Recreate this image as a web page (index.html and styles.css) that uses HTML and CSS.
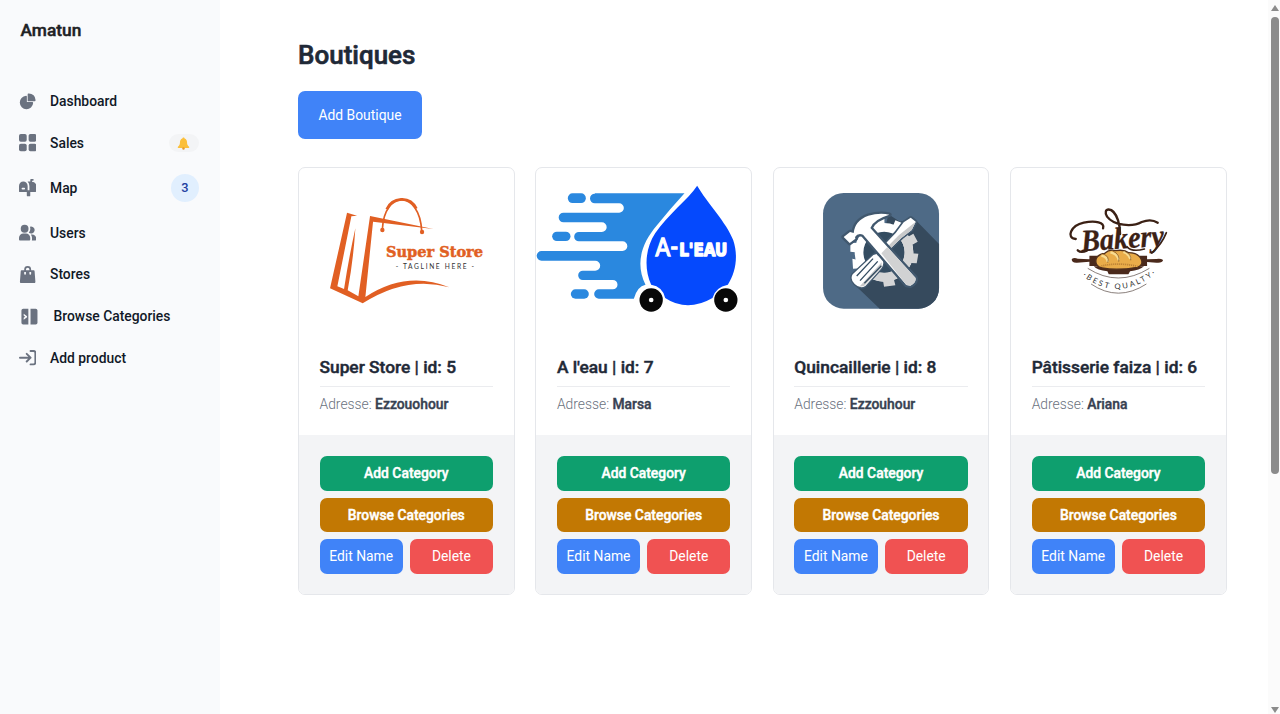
FILE: index.html
```html
<!DOCTYPE html>
<html lang="fr">
<head>
<meta charset="utf-8">
<title>Amatun</title>
<link rel="stylesheet" href="styles.css">
</head>
<body>
<div class="app">
  <aside class="sidebar">
    <div class="brand">Amatun</div>
    <nav class="nav">
      <a class="nav-item"><svg class="icon" viewBox="0 0 22 21"><path d="M16.975 11H10V4.025a1 1 0 0 0-1.066-.998 8.5 8.5 0 1 0 9.039 9.039.999.999 0 0 0-1-1.066h.002Z"/><path d="M12.5 0c-.157 0-.311.01-.565.027A1 1 0 0 0 11 1.02V10h8.975a1 1 0 0 0 1-.935c.013-.188.028-.374.028-.565A8.51 8.51 0 0 0 12.5 0Z"/></svg><span>Dashboard</span></a>
      <a class="nav-item"><svg class="icon" viewBox="0 0 18 18"><rect width="8" height="8" rx="1.857"/><rect x="10" width="8" height="8" rx="1.857"/><rect y="10" width="8" height="8" rx="1.857"/><rect x="10" y="10" width="8" height="8" rx="1.857"/></svg><span>Sales</span><span class="bell"><svg viewBox="0 0 14 14"><path d="M7 .5c-.7 0-1.2.5-1.2 1.1C3.9 2.200 3.300 3.900 3.200 5.600 3.100 8 2.700 9 1 10.600c-.5.500-.2 1.300.5 1.300h11c.7 0 1-.8.5-1.300C11.300 9 10.900 8 10.800 5.600 10.700 3.900 10.100 2.200 8.200 1.600 8.200 1 7.700.5 7 .5Z"/><circle class="clapper" cx="7" cy="12.300" r="1.300"/></svg></span></a>
      <a class="nav-item"><svg class="icon" viewBox="0 0 20 20"><path d="m17.418 3.623-.018-.008a6.713 6.713 0 0 0-2.4-.569V2h1a1 1 0 1 0 0-2h-2a1 1 0 0 0-1 1v2H9.890A6.977 6.977 0 0 1 12 8v5h-2V8A5 5 0 1 0 0 8v6a1 1 0 0 0 1 1h8v4a1 1 0 0 0 1 1h2a1 1 0 0 0 1-1v-4h6a1 1 0 0 0 1-1V8a5 5 0 0 0-2.582-4.377ZM6 12H4a1 1 0 0 1 0-2h2a1 1 0 0 1 0 2Z"/></svg><span>Map</span><span class="count">3</span></a>
      <a class="nav-item"><svg class="icon" viewBox="0 0 20 18"><path d="M14 2a3.963 3.963 0 0 0-1.4.267 6.439 6.439 0 0 1-1.331 6.638A4 4 0 1 0 14 2Zm1 9h-1.264A6.957 6.957 0 0 1 15 15v2a2.970 2.970 0 0 1-.184 1H19a1 1 0 0 0 1-1v-1a5.006 5.006 0 0 0-5-5ZM6.500 9a4.500 4.500 0 1 0 0-9 4.500 4.500 0 0 0 0 9ZM8 10H5a5.006 5.006 0 0 0-5 5v2a1 1 0 0 0 1 1h11a1 1 0 0 0 1-1v-2a5.006 5.006 0 0 0-5-5Z"/></svg><span>Users</span></a>
      <a class="nav-item"><svg class="icon" viewBox="0 0 18 20"><path d="M17 5.923A1 1 0 0 0 16 5h-3V4a4 4 0 1 0-8 0v1H2a1 1 0 0 0-1 .923L.086 17.846A2 2 0 0 0 2.080 20h13.840a2 2 0 0 0 1.994-2.153L17 5.923ZM7 9a1 1 0 0 1-2 0V7h2v2Zm0-5a2 2 0 1 1 4 0v1H7V4Zm6 5a1 1 0 1 1-2 0V7h2v2Z"/></svg><span>Stores</span></a>
      <a class="nav-item indented"><svg class="icon" viewBox="0 0 20 20"><path fill-rule="evenodd" d="M2.500 1H8.500v18H2.500a2 2 0 0 1-2-2V3a2 2 0 0 1 2-2Zm.6 5.500v2.300L4.700 10l-1.600 1.200v2.300L7 10.600V9.400Z"/><path d="M11 1h6a2 2 0 0 1 2 2v14a2 2 0 0 1-2 2h-6Z"/></svg><span>Browse Categories</span></a>
      <a class="nav-item"><svg class="icon line" viewBox="0 0 18 16"><path d="M1 8h11m0 0L8 4m4 4-4 4m4-11h3a2 2 0 0 1 2 2v10a2 2 0 0 1-2 2h-3"/></svg><span>Add product</span></a>
    </nav>
  </aside>

  <main class="main">
    <h1 class="title">Boutiques</h1>
    <button class="btn add">Add Boutique</button>
    <section class="grid">
      <article class="card">
        <svg class="media" viewBox="299 168 214.500 173">
          <g transform="translate(290 160) scale(.33333)">
            <g fill="#e15f23">
              <path d="M171 158 201 167 184 169 142 379 162 387Q176 295 196 205 190 300 173 391L205 409 240 168 430 207 249 185 226 411Q350 330 478 382 350 346 218 430L120 385Z"/>
              <circle cx="277" cy="210" r="6.500"/><circle cx="396" cy="216" r="6.500"/>
            </g>
            <path fill="none" stroke="#e15f23" stroke-width="5" d="M277 207C283 90 389 90 395 213"/>
            <path fill="none" stroke="#e15f23" stroke-width="8" d="M290 148C306 112 359 105 379 146"/>
            <text class="store-name" x="288" y="290" textLength="291" lengthAdjust="spacingAndGlyphs">Super Store</text>
            <text class="tagline" x="317" y="326" textLength="235">- TAGLINE HERE -</text>
          </g>
        </svg>
        <div class="card-body"><h2>Super Store | id: 5</h2><p>Adresse: <b>Ezzouohour</b></p></div>
        <div class="actions"><button class="btn green">Add Category</button><button class="btn amber">Browse Categories</button><button class="btn">Edit Name</button><button class="btn red">Delete</button></div>
      </article>

      <article class="card">
        <svg class="media" viewBox="536.200 168 214.500 173">
          <g transform="translate(530 160) scale(.33333)">
            <g fill="#2a88df">
              <rect x="114" y="100" width="54" height="29" rx="14"/><rect x="67" y="215" width="55" height="28" rx="14"/><rect x="123" y="388" width="54" height="28" rx="14"/>
              <path d="M195 100H464Q420 148 382 195C332 253 317 314 347 374Q322 379 312 416H207a14 14 0 0 1 0-28H249a14 14 0 0 0 0-28H159a14 14 0 0 1 0-28H196a14 14 0 0 0 0-30H35a14 14 0 0 1 0-29H278a14 14 0 0 0 0-29H147a14 14 0 0 1 0-28H216a14 14 0 0 0 0-29H101a14 14 0 0 1 0-29H268a14 14 0 0 0 0-28H195a14 14 0 0 1 0-29Z"/>
            </g>
            <path fill="#0549fd" d="M502 77C530 126 592 190 610 240 626 287 618 338 594 374Q557 381 548 414Q472 458 406 414 399 380 364 374C342 325 346 266 376 220 412 165 475 118 502 77Z"/>
            <g fill="#080808"><circle cx="364" cy="420" r="35"/><circle cx="588" cy="420" r="35"/></g>
            <g fill="#fff"><circle cx="364" cy="420" r="7"/><circle cx="588" cy="420" r="7"/></g>
            <text class="eau-a" x="377" y="289" textLength="68" lengthAdjust="spacingAndGlyphs">A-</text>
            <text class="eau-b" x="448" y="289" textLength="144" lengthAdjust="spacingAndGlyphs">L'EAU</text>
          </g>
        </svg>
        <div class="card-body"><h2>A l'eau | id: 7</h2><p>Adresse: <b>Marsa</b></p></div>
        <div class="actions"><button class="btn green">Add Category</button><button class="btn amber">Browse Categories</button><button class="btn">Edit Name</button><button class="btn red">Delete</button></div>
      </article>

      <article class="card">
        <svg class="media" viewBox="774 168 214.500 173">
          <g transform="translate(800 170) scale(.33333)">
            <rect x="69" y="69" width="348" height="347" rx="62" fill="#4e6a86"/>
            <path fill="#364a5d" d="M265 133 300 155 340 143 417 222V354a62 62 0 0 1-62 62H239L170 350 190 290 240 240Z"/>
            <circle cx="252" cy="247" r="62" fill="#344c61"/>
            <circle cx="252" cy="247" r="75" fill="none" stroke="#fff" stroke-width="26"/>
            <path fill="none" stroke="#d4d5d6" stroke-width="26" d="M307 196A75 75 0 0 1 215 312"/>
            <g fill="#fff"><path d="m218 176 4-30 31 1 1 28ZM273 182l13-31 22 9-8 33ZM175 270l-18-4 2 30 27-1ZM177 219l-26-1 0 27 29 3Z"/><path fill="#d4d5d6" d="m312 207 28-16 13 24-28 16ZM323 249l32 2-5 29-34-2ZM246 314l32 0 8 32-34 4Z"/></g>
            <path fill="#fff" stroke="#41586e" stroke-width="10" stroke-linejoin="round" paint-order="stroke" d="m332 143 15 12-12 25-31 24-88 85-13-13 84-87 24-32Z"/>
            <path fill="#c8c9ca" d="m347 155-12 25-31 24-88 85-6-6 87-88Z"/>
            <path fill="#fff" stroke="#41586e" stroke-width="8" paint-order="stroke" d="M220 255 230 252 234 257Q243 257 246 265 255 280 243 296L196 348Q180 358 164 342 149 327 158 313Z"/>
            <path fill="#c8c9ca" d="m245 277-67 73 14-2 52-55Z"/>
            <path stroke="#344c61" stroke-width="4" d="m219 266-49 52M233 274l-53 58M244 287l-51 53"/>
            <path fill="#fff" stroke="#41586e" stroke-width="14" stroke-linejoin="round" paint-order="stroke" d="M131 201 150 186 161 189Q164 152 205 137 238 128 268 134 220 148 211 174L263 232 346 323q4 14-15 24l-12-2L189 194Q173 188 165 201L166 206 149 219Z"/>
            <path fill="#d1d2d3" d="m244 250 18-19 84 92q4 14-15 24l-12-2Z"/>
          </g>
        </svg>
        <div class="card-body"><h2>Quincaillerie | id: 8</h2><p>Adresse: <b>Ezzouhour</b></p></div>
        <div class="actions"><button class="btn green">Add Category</button><button class="btn amber">Browse Categories</button><button class="btn">Edit Name</button><button class="btn red">Delete</button></div>
      </article>

      <article class="card">
        <svg class="media" viewBox="1011.300 168 214.500 173">
          <g transform="translate(1050 190) scale(.33333)">
            <g fill="none" stroke="#3b2115" stroke-width="7" stroke-linecap="round">
              <path d="M78 147C48 145 63 106 102 98 137 91 166 97 160 115M84 181Q94 190 111 182"/>
              <path d="M211 132Q211 110 205 91C190 45 156 54 172 80 192 107 247 112 276 96Q304 85 324 98"/>
              <path stroke-width="5" d="M232 170Q246 187 284 177M350 128Q335 165 306 189"/>
            </g>
            <text class="bakery" transform="rotate(-4 210 165)" x="95" y="176" textLength="249" lengthAdjust="spacingAndGlyphs">Bakery</text>
            <g fill="#4a291b"><path d="M66 207Q73 202 84 206L119 208V197H144V228H119V215L82 218Q65 219 66 207ZM340 210Q333 205 320 207L292 208V197H269V228H292V216L320 218Q338 220 340 210Z"/><path d="M132 229H283Q270 241 241 244L236 253H177L173 244Q142 241 132 229Z"/></g>
            <path fill="#e9ac49" stroke="#51301c" stroke-width="4" d="M141 224C132 205 147 191 165 190Q179 177 197 182 224 178 237 188 266 188 275 209 281 226 263 232 203 242 157 234 145 232 141 224Z"/>
            <path fill="none" stroke="#f9dc91" stroke-width="7" d="M155 197Q173 201 174 216M182 187Q203 191 207 211M221 186Q239 193 242 207"/>
            <path fill="none" stroke="#765026" stroke-width="2" d="M158 190Q181 199 174 218M188 182Q212 193 207 215M225 184Q246 193 243 211"/>
            <path fill="none" stroke="#b57b32" stroke-width="5" stroke-dasharray="3 3" d="M155 228Q206 216 264 229"/>
            <path fill="none" stroke="#4f4039" stroke-width="2" d="M114 235Q205 293 299 235M124 282Q205 337 290 282"/>
            <path id="bakery-arc" fill="none" d="M98 257Q205 340 316 252"/>
            <text class="quality"><textPath href="#bakery-arc" textLength="240">·BEST QUALTY·</textPath></text>
          </g>
        </svg>
        <div class="card-body"><h2>Pâtisserie faiza | id: 6</h2><p>Adresse: <b>Ariana</b></p></div>
        <div class="actions"><button class="btn green">Add Category</button><button class="btn amber">Browse Categories</button><button class="btn">Edit Name</button><button class="btn red">Delete</button></div>
      </article>
    </section>
  </main>

  <div class="scrollbar"><span class="arrow up"></span><span class="thumb"></span><span class="arrow down"></span></div>
</div>
</body>
</html>
```
FILE: styles.css
```css
* { box-sizing: border-box; }
html { font-size: 13.870px; }
body { margin: 0; overflow: hidden; background: #fff; color: #1f2937; font-family: Roboto, "Liberation Sans", sans-serif; }
h1, h2, p { margin: 0; }
.app { display: flex; width: 1280px; height: 714px; }

.sidebar { width: 220px; background: #f9fafc; padding: 17px 14px; }
.brand { height: 67.100px; padding-left: 6.500px; font-size: 17.340px; line-height: 27px; font-weight: 500; color: #202124; -webkit-text-stroke: .45px; }
.nav { display: flex; flex-direction: column; gap: 6.940px; }
.nav-item { display: flex; align-items: center; min-height: 34.670px; padding: 0 7px 0 5px; font-size: 13.870px; line-height: 20.800px; font-weight: 500; color: #111827; }
.nav-item:nth-child(3) { min-height: 41.600px; }
.icon { width: 17.340px; height: 17.340px; margin-right: 13.700px; fill: #6b7280; flex: none; }
.line { fill: none; stroke: #6b7280; stroke-width: 2; stroke-linecap: round; stroke-linejoin: round; }
.indented { padding-left: 6.600px; }
.indented .icon { margin-right: 15.600px; }
.bell { display: flex; justify-content: center; align-items: center; width: 30px; height: 18px; margin-left: auto; padding-right: 1px; border-radius: 9px; background: #f3f4f6; }
.bell svg { width: 13px; height: 13px; fill: #fbbf3a; }
.bell .clapper { fill: #e59a2c; }
.count { width: 28px; height: 28px; margin-left: auto; border-radius: 50%; background: #e1effe; color: #233ea0; text-align: center; line-height: 28px; font-size: 12.800px; }

.main { flex: 1; padding: 38px 41.300px 0 78px; }
.title { font-size: 26px; line-height: 34px; font-weight: 500; -webkit-text-stroke: .65px; }
.btn { height: 34.670px; padding: 0; border: 0; border-radius: 7px; background: #4083f8; color: #fff; font: 400 13.870px/20px Roboto, sans-serif; white-space: nowrap; }
.btn.add { display: block; width: 124px; height: 48px; margin-top: 19px; }
.btn.green, .btn.amber { grid-column: span 2; font-weight: 500; -webkit-text-stroke: .4px; }
.btn.green { background: #0e9f6e; }
.btn.amber { background: #c27803; }
.btn.red { background: #f05252; }

.grid { display: grid; grid-template-columns: repeat(4, 1fr); gap: 20.800px; margin-top: 28px; }
.card { min-width: 0; height: 428px; border: 1px solid #e5e7eb; border-radius: 7px; overflow: hidden; background: #fff; }
.media { display: block; width: 100%; height: 173px; }
.card-body { height: 94px; padding: 12px 20.500px 0; }
h2 { height: 33.500px; padding-top: .6px; border-bottom: 1px solid #ebecef; font-size: 17.340px; line-height: 27px; font-weight: 500; white-space: nowrap; -webkit-text-stroke: .45px; }
p { margin-top: 7px; font-size: 13.870px; line-height: 21px; font-weight: 300; color: #6b7280; }
p b { font-weight: 500; color: #374151; -webkit-text-stroke: .4px; }
.actions { display: grid; grid-template-columns: 1fr 1fr; gap: 6.930px; height: 159px; padding: 21px 20.500px; background: #f3f4f6; align-content: start; }

.store-name { fill: #e15f23; font: bold 43px "DejaVu Serif", serif; stroke: #e15f23; stroke-width: 1.500px; }
.tagline { fill: #333; font: 400 20px Lato, sans-serif; }
.eau-a { fill: #fff; stroke: #fff; stroke-width: 4px; font: 500 76px Lato, sans-serif; }
.eau-b { fill: #fff; stroke: #fff; stroke-width: 4px; stroke-linejoin: round; font: bold 55px "DejaVu Sans Condensed", "DejaVu Sans", sans-serif; }
.bakery { fill: #3b2115; stroke: #3b2115; stroke-width: 1px; font: italic bold 92px "Liberation Serif", serif; }
.quality { fill: #333; font: 400 23px Lato, sans-serif; }

.scrollbar { display: flex; flex-direction: column; align-items: center; width: 12px; padding: 5px 0 1px 2px; background: #fbfbfb; }
.arrow { border: 4.500px solid transparent; border-top-width: 0; border-bottom: 6px solid #8b8b8b; }
.thumb { width: 8px; height: 457px; margin-top: 6px; border-radius: 4px; background: #8b8b8b; }
.down { margin-top: auto; transform: rotate(180deg); }
```
